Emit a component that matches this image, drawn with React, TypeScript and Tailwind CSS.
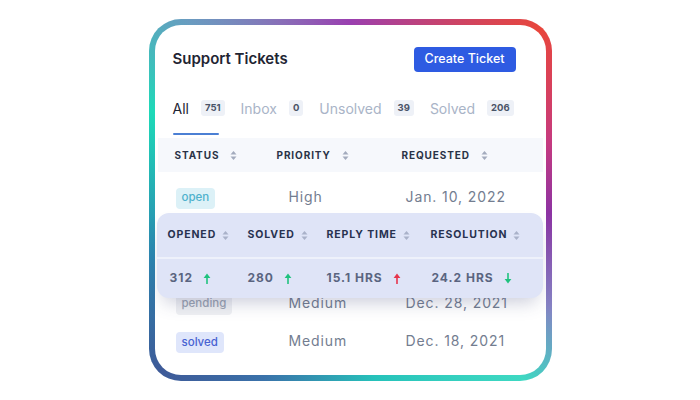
import React from 'react'

type Tab = { label: string; count: string; active?: boolean }

const tabs: Tab[] = [
  { label: 'All', count: '751', active: true },
  { label: 'Inbox', count: '0' },
  { label: 'Unsolved', count: '39' },
  { label: 'Solved', count: '206' },
]

const SortIcon = ({ color = '#a3abbd' }: { color?: string }) => (
  <svg width="7" height="11" viewBox="0 0 7 11" fill={color}>
    <path d="M0.5 4.6 L3.5 1 L6.5 4.6 Z" />
    <path d="M0.5 6.4 L3.5 10 L6.5 6.4 Z" />
  </svg>
)

const Arrow = ({ dir, color }: { dir: 'up' | 'down'; color: string }) => (
  <svg
    width="8"
    height="11"
    viewBox="0 0 8 11"
    className={dir === 'down' ? 'rotate-180' : ''}
  >
    <path d="M4 10.5 V4" stroke={color} strokeWidth="1.6" strokeLinecap="round" />
    <path d="M0.6 5 L4 0.6 L7.4 5 Z" fill={color} />
  </svg>
)

const Badge = ({ text, tone }: { text: string; tone: 'open' | 'pending' | 'solved' }) => {
  const tones = {
    open: 'bg-[#dcf1f7] text-[#4fb2cd]',
    pending: 'bg-[#eff0f3] text-[#9ba3b1]',
    solved: 'bg-[#dfe6fb] text-[#4862d2]',
  }
  return (
    <span className={`inline-flex h-[21px] items-center rounded-[4px] px-[6px] text-[11.5px] font-medium ${tones[tone]}`}>
      {text}
    </span>
  )
}

function TicketRow({ status, priority, date, className }: {
  status: 'open' | 'pending' | 'solved'
  priority: string
  date: string
  className: string
}) {
  return (
    <div className={`mx-[3px] grid grid-cols-[102px_125px_1fr] items-center pl-[18px] ${className}`}>
      <div>
        <Badge text={status} tone={status} />
      </div>
      <div className="pl-[11px] text-[14px] tracking-[0.9px] text-[#737d90]">{priority}</div>
      <div className="pl-[3px] text-[14px] tracking-[0.9px] text-[#737d90]">{date}</div>
    </div>
  )
}

export default function App() {
  return (
    <div className="flex h-[400px] w-[700px] items-center justify-center bg-white font-[family-name:Inter,'Liberation_Sans',sans-serif]">
      <div className="h-[362px] w-[403px] rounded-[32px] bg-[image:conic-gradient(from_0deg,#9a3fb0_0deg,#e8463c_48deg,#c53a80_74deg,#8c33a3_94deg,#8682c4_118deg,#3ed8c2_136deg,#26c2ba_172deg,#3a72aa_206deg,#3e5a98_228deg,#2b86b0_254deg,#1ed9b8_294deg,#6a9bc0_318deg,#8870b8_338deg,#9a3fb0_360deg)] p-[6px]">
        <div className="relative h-full rounded-[26px] bg-white">
          {/* header */}
          <div className="flex h-[25px] items-center justify-between pl-[18px] pr-[30px] pt-0 translate-y-[22px]">
            <h1 className="text-[15px] font-semibold text-[#1f2533]">Support Tickets</h1>
            <button className="h-[25px] w-[102px] rounded-[4px] bg-[#2e5be2] text-[12.5px] font-medium text-white">
              Create Ticket
            </button>
          </div>

          {/* tabs */}
          <div className="mt-[46px] flex h-[24px] items-center pl-[18px]">
            {tabs.map((t) => (
              <div key={t.label} className="mr-[16px] flex items-center gap-[12px]">
                <span className={`text-[14px] ${t.active ? 'text-[#1c2434]' : 'text-[#a9b4c7]'}`}>{t.label}</span>
                <span className="flex h-[16px] items-center rounded-[3px] bg-[#eef1f7] px-[4px] text-[9.5px] font-bold text-[#4a5468]">
                  {t.count}
                </span>
              </div>
            ))}
          </div>
          <div className="ml-[18px] mt-[13px] h-[2px] w-[46px] rounded-full bg-[#4b7fd4]" />

          {/* table head */}
          <div className="mx-[3px] mt-[3px] grid h-[34px] grid-cols-[102px_125px_1fr] items-center bg-[#f6f8fc] pl-[17px]">
            {['STATUS', 'PRIORITY', 'REQUESTED'].map((h) => (
              <div key={h} className="flex items-center gap-[11px] text-[10px] font-bold tracking-[0.9px] text-[#2a3347]">
                {h}
                <SortIcon />
              </div>
            ))}
          </div>

          <TicketRow status="open" priority="High" date="Jan. 10, 2022" className="h-[48px]" />
          <TicketRow status="pending" priority="Medium" date="Dec. 28, 2021" className="mt-[63px] h-[38px]" />
          <TicketRow status="solved" priority="Medium" date="Dec. 18, 2021" className="h-[39px]" />

          {/* floating stats panel */}
          <div className="absolute left-[2px] top-[188px] h-[85px] w-[386px] rounded-[12px] bg-[#dfe4f7] shadow-[0_10px_18px_-6px_rgba(60,70,120,0.28)]">
            <div className="grid h-[44px] grid-cols-[80px_79px_104px_1fr] items-center pl-[11px]">
              {['OPENED', 'SOLVED', 'REPLY TIME', 'RESOLUTION'].map((h) => (
                <div key={h} className="flex items-center gap-[6px] text-[10.5px] font-bold tracking-[0.9px] text-[#283250]">
                  {h}
                  <SortIcon color="#a9b1c9" />
                </div>
              ))}
            </div>
            <div className="h-[1.5px] bg-[#eef1fb]" />
            <div className="grid h-[39px] grid-cols-[80px_79px_104px_1fr] items-center pl-[13px] text-[12px] font-bold tracking-[1px] text-[#5a6480]">
              <div className="flex items-center gap-[10px]">312 <Arrow dir="up" color="#1fc27e" /></div>
              <div className="flex items-center gap-[10px] -ml-[2px]">280 <Arrow dir="up" color="#1fc27e" /></div>
              <div className="flex items-center gap-[10px] -ml-[2px]">15.1 HRS <Arrow dir="up" color="#e6344c" /></div>
              <div className="flex items-center gap-[10px] -ml-[1px]">24.2 HRS <Arrow dir="down" color="#1fc27e" /></div>
            </div>
          </div>
        </div>
      </div>
    </div>
  )
}
